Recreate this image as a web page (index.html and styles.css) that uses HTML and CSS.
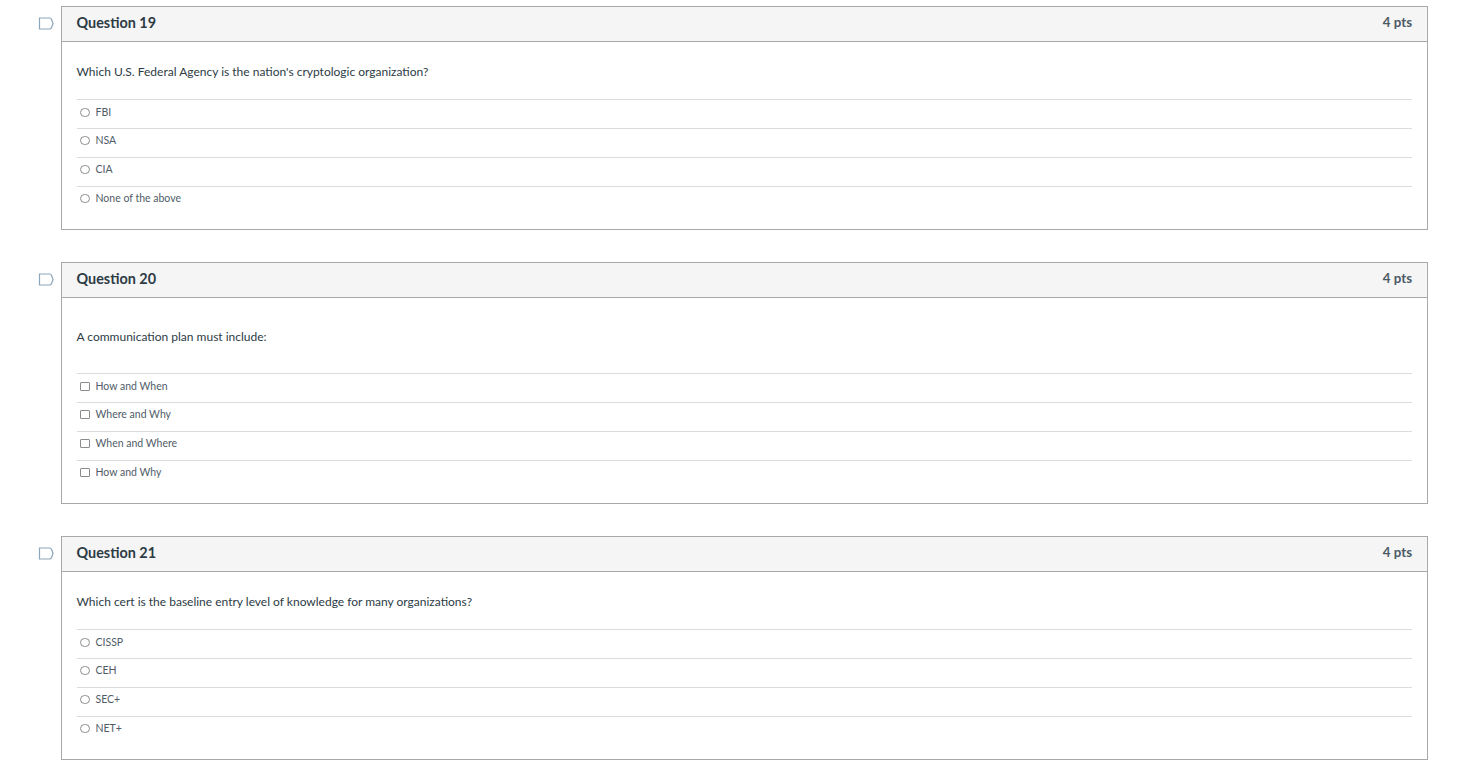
FILE: index.html
```html
<!DOCTYPE html>
<html lang="en">
<head>
<meta charset="utf-8">
<title>Quiz</title>
<link rel="stylesheet" href="styles.css">
</head>
<body>
<main class="quiz">
  <section class="question-row">
    <svg class="flag" width="16" height="13" viewBox="0 0 16 13"><path d="M1.5 1H11.5Q13 1 13.6 2.5L15 6.5L13.6 10.5Q13 12 11.5 12H1.5Z"/></svg>
    <div class="card">
      <header class="card-head"><h2>Question 19</h2><span class="pts">4 pts</span></header>
      <div class="card-body">
        <p class="prompt">Which U.S. Federal Agency is the nation's cryptologic organization?</p>
        <ul class="answers">
          <li><span class="radio"></span>FBI</li>
          <li><span class="radio"></span>NSA</li>
          <li><span class="radio"></span>CIA</li>
          <li><span class="radio"></span>None of the above</li>
        </ul>
      </div>
    </div>
  </section>
  <section class="question-row">
    <svg class="flag" width="16" height="13" viewBox="0 0 16 13"><path d="M1.5 1H11.5Q13 1 13.6 2.5L15 6.5L13.6 10.5Q13 12 11.5 12H1.5Z"/></svg>
    <div class="card">
      <header class="card-head"><h2>Question 20</h2><span class="pts">4 pts</span></header>
      <div class="card-body">
        <p class="prompt prompt-tall">A communication plan must include:</p>
        <ul class="answers">
          <li><span class="check"></span>How and When</li>
          <li><span class="check"></span>Where and Why</li>
          <li><span class="check"></span>When and Where</li>
          <li><span class="check"></span>How and Why</li>
        </ul>
      </div>
    </div>
  </section>
  <section class="question-row">
    <svg class="flag" width="16" height="13" viewBox="0 0 16 13"><path d="M1.5 1H11.5Q13 1 13.6 2.5L15 6.5L13.6 10.5Q13 12 11.5 12H1.5Z"/></svg>
    <div class="card">
      <header class="card-head"><h2>Question 21</h2><span class="pts">4 pts</span></header>
      <div class="card-body">
        <p class="prompt">Which cert is the baseline entry level of knowledge for many organizations?</p>
        <ul class="answers">
          <li><span class="radio"></span>CISSP</li>
          <li><span class="radio"></span>CEH</li>
          <li><span class="radio"></span>SEC+</li>
          <li><span class="radio"></span>NET+</li>
        </ul>
      </div>
    </div>
  </section>
</main>
</body>
</html>
```
FILE: styles.css
```css
* { box-sizing: border-box; }
html, body { margin: 0; background: #fff; overflow: hidden; }
body { font-family: Lato, "Noto Sans", sans-serif; color: #2d3b45; }
.quiz { display: flex; flex-direction: column; gap: 32px; padding: 6px 30px 0 38px; }
.question-row { display: flex; align-items: flex-start; gap: 7px; }
.flag { flex: none; margin-top: 11px; fill: #fff; stroke: #8ca6ba; stroke-width: 1.2; }
.card { flex: 1; border: 1px solid #a9a9a9; }
.card-head { display: flex; justify-content: space-between; align-items: center; height: 35px; padding: 0 15px 2px 14.5px; background: #f5f5f5; border-bottom: 1px solid #a9a9a9; }
.card-head h2 { margin: 0; font-size: 14.4px; font-weight: 700; line-height: 20px; }
.pts { font-size: 13.3px; font-weight: 700; color: #4b5a64; line-height: 18px; margin-top: -3px; }
.card-body { padding: 0 15px 0 14.5px; }
.prompt { display: flex; align-items: center; margin: 0; height: 57px; padding-top: 2px; font-size: 12px; }
.prompt-tall { height: 75px; }
.answers { list-style: none; margin: 0; padding: 0 0 14px; }
.answers li { display: flex; align-items: center; height: 29px; border-top: 1px solid #dcdcdc; padding: 0 0 7px 3.5px; font-size: 10.5px; color: #4f5d67; }
.answers li:first-child { padding-bottom: 5px; }
.radio { flex: none; width: 9.5px; height: 9.5px; margin: 2px 6px 0 0; border: 1px solid #8c8c8c; border-radius: 50%; }
.check { flex: none; width: 9.5px; height: 9.5px; margin: 2px 6px 0 0; border: 1px solid #8c8c8c; border-radius: 1px; }
```
